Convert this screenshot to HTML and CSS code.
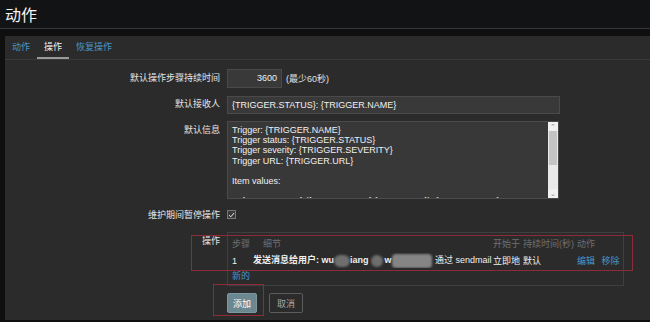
FILE: index.html
```html
<!DOCTYPE html>
<html lang="zh-CN">
<head>
    <meta charset="UTF-8">
    <title>动作</title>
    <link rel="stylesheet" href="styles.css">
</head>
<body>
    <div class="page-header">
        <h1>动作</h1>
    </div>

    <div class="panel">
        <ul class="tabs">
            <li><a href="#">动作</a></li>
            <li class="active"><a href="#">操作</a></li>
            <li><a href="#">恢复操作</a></li>
        </ul>

        <div class="form">
            <div class="form-row">
                <label class="form-label">默认操作步骤持续时间</label>
                <div class="form-field">
                    <div class="input input-short">3600</div>
                    <span class="hint">(最少60秒)</span>
                </div>
            </div>

            <div class="form-row">
                <label class="form-label">默认接收人</label>
                <div class="form-field">
                    <div class="input input-wide">{TRIGGER.STATUS}: {TRIGGER.NAME}</div>
                </div>
            </div>

            <div class="form-row">
                <label class="form-label">默认信息</label>
                <div class="form-field">
                    <div class="textarea">
                        <div class="textarea-text">Trigger: {TRIGGER.NAME}
Trigger status: {TRIGGER.STATUS}
Trigger severity: {TRIGGER.SEVERITY}
Trigger URL: {TRIGGER.URL}

Item values:

1. {ITEM.NAME1} ({HOST.NAME1}:{ITEM.KEY1}): {ITEM.VALUE1}</div>
                        <div class="scrollbar">
                            <span class="scroll-arrow">&#8963;</span>
                            <span class="scroll-thumb"></span>
                            <span class="scroll-track"></span>
                            <span class="scroll-arrow">&#8964;</span>
                        </div>
                    </div>
                </div>
            </div>

            <div class="form-row row-check">
                <label class="form-label">维护期间暂停操作</label>
                <div class="form-field">
                    <span class="checkbox">
                        <svg viewBox="0 0 10 10" width="8" height="8"><path d="M1.5 5.2 L4 7.6 L8.6 2.2" fill="none" stroke="#f0f0f0" stroke-width="1.4"/></svg>
                    </span>
                </div>
            </div>

            <div class="form-row row-ops">
                <label class="form-label">操作</label>
                <div class="form-field">
                    <div class="ops-table">
                        <div class="ops-head">
                            <span class="col-step">步骤</span>
                            <span class="col-detail">细节</span>
                            <span class="col-start">开始于</span>
                            <span class="col-dur">持续时间(秒)</span>
                            <span class="col-act">动作</span>
                        </div>
                        <div class="ops-row">
                            <span class="col-step">1</span>
                            <span class="col-detail"><b>发送消息给用户: wu<i class="blur blur-a"></i>iang<i class="blur blur-b"></i>w<i class="blur blur-c"></i></b> <span class="via">通过 sendmail</span></span>
                            <span class="col-start">立即地</span>
                            <span class="col-dur">默认</span>
                            <span class="col-act"><a href="#">编辑</a> <a href="#">移除</a></span>
                        </div>
                        <div class="ops-new"><a href="#">新的</a></div>
                    </div>
                </div>
                <span class="mark mark-ops"></span>
            </div>

            <div class="form-row row-buttons">
                <span class="form-label"></span>
                <div class="form-field buttons">
                    <button class="btn btn-primary">添加</button>
                    <button class="btn btn-alt">取消</button>
                    <span class="mark mark-add"></span>
                </div>
            </div>
        </div>
    </div>
</body>
</html>
```

FILE: styles.css
```css
* {
    margin: 0;
    padding: 0;
    box-sizing: border-box;
}

html, body {
    height: 100%;
    overflow: hidden;
}

body {
    background-color: #0f0f10;
    color: #ececec;
    font-family: "Liberation Sans", Arial, "Noto Sans CJK SC", sans-serif;
    font-size: 9px;
}

a {
    color: #4896c8;
    text-decoration: none;
}

.page-header {
    height: 29px;
    background-color: #121315;
    border-bottom: 1px solid #34363a;
    padding-left: 5px;
    display: flex;
    align-items: center;
}

.page-header h1 {
    font-size: 16px;
    font-weight: normal;
    color: #f4f4f4;
}

.panel {
    margin: 7px 0 0 5px;
    height: 284px;
    background-color: #2b2b2b;
}

.tabs {
    list-style: none;
    display: flex;
    height: 24px;
    border-bottom: 1px solid #3b3b3b;
}

.tabs li {
    padding: 0 7px;
    display: flex;
    align-items: center;
    border-bottom: 2px solid transparent;
}

.tabs li.active {
    border-bottom-color: #9a9a9a;
}

.tabs li.active a {
    color: #f2f2f2;
}

.form {
    padding-top: 9px;
    display: flex;
    flex-direction: column;
    gap: 7px;
}

.form-row {
    display: flex;
    gap: 7px;
    position: relative;
}

.form-label {
    width: 215px;
    flex-shrink: 0;
    text-align: right;
    line-height: 19px;
    color: #e6e6e6;
}

.form-field {
    display: flex;
    align-items: center;
}

.input {
    height: 19px;
    line-height: 17px;
    background-color: #393939;
    border: 1px solid #4a4a4a;
    color: #f0f0f0;
    padding: 0 4px;
}

.input-short {
    width: 55px;
    text-align: right;
}

.input-wide {
    width: 333px;
    height: 18px;
    line-height: 16px;
}

.hint {
    margin-left: 4px;
    color: #e2e2e2;
}

.textarea {
    width: 332px;
    height: 78px;
    background-color: #383838;
    border: 1px solid #4a4a4a;
    display: flex;
    overflow: hidden;
}

.textarea-text {
    flex: 1;
    white-space: pre;
    overflow: hidden;
    line-height: 10.2px;
    padding: 3px 4px 0;
    color: #f0f0f0;
}

.scrollbar {
    width: 10px;
    flex-shrink: 0;
    display: flex;
    flex-direction: column;
    background-color: #e9e9e9;
}

.scroll-arrow {
    height: 9px;
    font-size: 7px;
    line-height: 9px;
    text-align: center;
    color: #8a8a8a;
    background-color: #f0f0f0;
}

.scroll-thumb {
    height: 34px;
    background-color: #c4c4c4;
    margin: 0 1px;
}

.scroll-track {
    flex: 1;
}

.row-check .form-field {
    height: 17px;
}

.checkbox {
    width: 9px;
    height: 9px;
    border: 1px solid #777;
    background-color: #3a3a3a;
    display: flex;
    align-items: center;
    justify-content: center;
}

.ops-table {
    width: 397px;
    height: 54px;
    border: 1px solid #3f3f3f;
    padding-left: 4px;
}

.ops-head, .ops-row {
    display: flex;
    align-items: center;
    white-space: nowrap;
}

.ops-head {
    height: 20px;
    color: #6f6f6f;
}

.ops-row {
    height: 15px;
    color: #f0f0f0;
}

.col-step {
    width: 21px;
    flex-shrink: 0;
}

.col-detail {
    width: 240px;
    flex-shrink: 0;
    overflow: hidden;
}

.ops-head .col-detail {
    padding-left: 10px;
}

.via {
    margin-left: 1px;
}

.col-start {
    width: 30px;
    flex-shrink: 0;
}

.col-dur {
    width: 54px;
    flex-shrink: 0;
}

.col-act a + a {
    margin-left: 4px;
}

.blur {
    display: inline-block;
    vertical-align: middle;
    height: 12px;
    border-radius: 6px;
    background-color: #6e6e6e;
    filter: blur(1.2px);
}

.blur-a {
    width: 16px;
}

.blur-b {
    width: 12px;
    margin: 0 2px;
}

.blur-c {
    width: 40px;
    height: 14px;
    border-radius: 4px;
    background-color: #858585;
}

.ops-new {
    height: 16px;
    line-height: 16px;
}

.buttons {
    gap: 12px;
    position: relative;
}

.btn {
    height: 20px;
    font-family: inherit;
    font-size: 9px;
    padding: 0;
    border-radius: 2px;
    white-space: nowrap;
}

.btn-primary {
    width: 30px;
    background-color: #6b8890;
    border: 1px solid #7d979e;
    color: #ffffff;
}

.btn-alt {
    width: 34px;
    background-color: transparent;
    border: 1px solid #5c5c5c;
    color: #a8a8a8;
}

.mark {
    position: absolute;
    border: 1.5px solid #8e2b38;
}

.mark-ops {
    left: 186px;
    top: 3px;
    width: 442px;
    height: 36px;
}

.mark-add {
    left: -14px;
    top: -9px;
    width: 51px;
    height: 32px;
}
```
